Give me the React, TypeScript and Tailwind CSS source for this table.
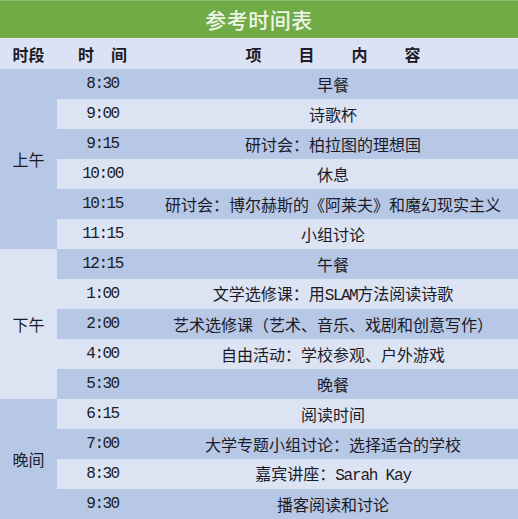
import React from "react";

const DARK = "bg-[#b7c8e6]";
const LIGHT = "bg-[#dce3f3]";

type Row = { t: string; c: React.ReactNode };

const rows: Row[] = [
  { t: "8:30", c: "早餐" },
  { t: "9:00", c: "诗歌杯" },
  { t: "9:15", c: "研讨会：柏拉图的理想国" },
  { t: "10:00", c: "休息" },
  { t: "10:15", c: "研讨会：博尔赫斯的《阿莱夫》和魔幻现实主义" },
  { t: "11:15", c: "小组讨论" },
  { t: "12:15", c: "午餐" },
  {
    t: "1:00",
    c: (
      <>
        文学选修课：用<span className="font-['Liberation_Mono',monospace] tracking-[-1.5px]">SLAM</span>方法阅读诗歌
      </>
    ),
  },
  { t: "2:00", c: "艺术选修课（艺术、音乐、戏剧和创意写作）" },
  { t: "4:00", c: "自由活动：学校参观、户外游戏" },
  { t: "5:30", c: "晚餐" },
  { t: "6:15", c: "阅读时间" },
  { t: "7:00", c: "大学专题小组讨论：选择适合的学校" },
  {
    t: "8:30",
    c: (
      <>
        嘉宾讲座：<span className="font-['Liberation_Mono',monospace] tracking-[-1.2px]">Sarah Kay</span>
      </>
    ),
  },
  { t: "9:30", c: "播客阅读和讨论" },
];

export default function App() {
  return (
    <div className="w-[518px] h-[519px] bg-white font-['Noto_Sans_CJK_SC',sans-serif] text-[#1b1b28] overflow-hidden">
      <div className="h-[38px] bg-[#70ab46] border-t border-[#8fbf70] flex items-center justify-center text-[21px] font-medium text-[#eef4e8] tracking-[0.5px]">
        参考时间表
      </div>
      <div className="grid grid-cols-[57px_91px_1fr] grid-rows-[repeat(16,30px)] border-t border-[#e9eef6]">
        <div className="bg-[#dbe2f3] flex items-center justify-center text-[16px] font-bold">时段</div>
        <div className="bg-[#dbe2f3] flex items-center justify-center text-[16px] font-bold gap-[17px]">
          <span>时</span>
          <span>间</span>
        </div>
        <div className="bg-[#dbe2f3] flex items-center justify-center text-[16px] font-bold gap-[37px]">
          <span>项</span>
          <span>目</span>
          <span>内</span>
          <span>容</span>
        </div>

        <div className={`${DARK} row-span-6 col-start-1 row-start-2 flex items-center justify-center text-[16px]`}>上午</div>
        <div className={`${LIGHT} row-span-5 col-start-1 row-start-8 flex items-center justify-center text-[16px]`}>下午</div>
        <div className={`${DARK} row-span-4 col-start-1 row-start-13 flex items-center justify-center text-[16px]`}>晚间</div>

        {rows.map((r, i) => {
          const bg = i % 2 === 0 ? DARK : LIGHT;
          return (
            <React.Fragment key={i}>
              <div className={`${bg} col-start-2 flex items-center justify-center font-['Liberation_Mono',monospace] text-[16px] tracking-[-1.5px]`}>
                {r.t}
              </div>
              <div className={`${bg} col-start-3 flex items-center justify-center text-[16px] whitespace-nowrap`}>
                <span>{r.c}</span>
              </div>
            </React.Fragment>
          );
        })}
      </div>
    </div>
  );
}
